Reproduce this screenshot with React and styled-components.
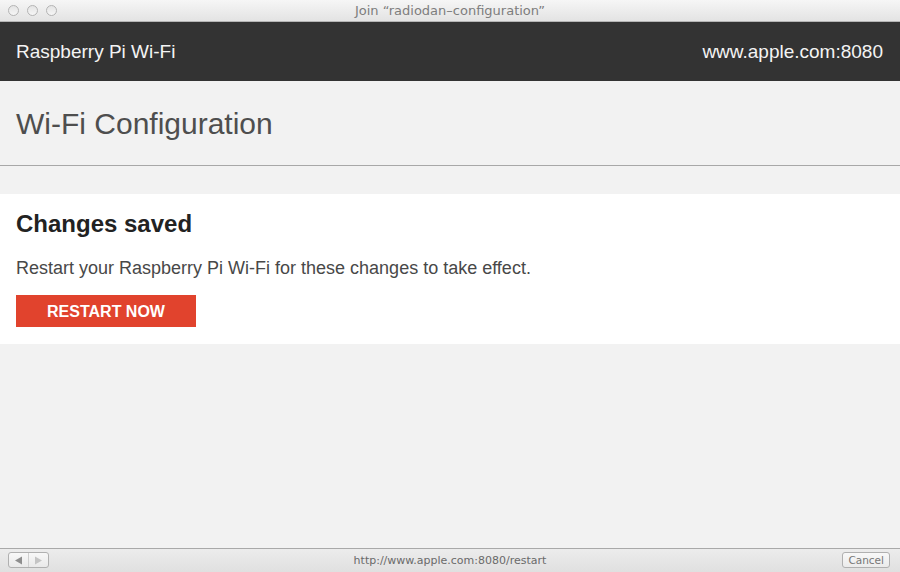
import React from "react";
import styled, { createGlobalStyle } from "styled-components";

const GlobalStyle = createGlobalStyle`
  html, body {
    margin: 0;
    padding: 0;
    height: 100%;
    background: #f2f2f2;
  }
  #root {
    height: 100%;
  }
`;

const App = () => {
  return (
    <>
      <GlobalStyle />
      <Window>
        <TitleBar>
          <Lights>
            <Light />
            <Light />
            <Light />
          </Lights>
          <WindowTitle>Join “radiodan–configuration”</WindowTitle>
        </TitleBar>

        <Page>
          <Header>
            <Brand>Raspberry Pi Wi-Fi</Brand>
            <Host>www.apple.com:8080</Host>
          </Header>

          <PageTitle>
            <h1>Wi-Fi Configuration</h1>
          </PageTitle>

          <Card>
            <CardHeading>Changes saved</CardHeading>
            <CardText>
              Restart your Raspberry Pi Wi-Fi for these changes to take effect.
            </CardText>
            <RestartButton>RESTART NOW</RestartButton>
          </Card>
        </Page>

        <StatusBar>
          <NavButtons>
            <NavHalf>
              <svg width="9" height="9" viewBox="0 0 9 9">
                <polygon points="8,0.5 8,8.5 1,4.5" fill="#8e8e8e" />
              </svg>
            </NavHalf>
            <NavHalf last>
              <svg width="9" height="9" viewBox="0 0 9 9">
                <polygon points="1,0.5 1,8.5 8,4.5" fill="#c4c4c4" />
              </svg>
            </NavHalf>
          </NavButtons>
          <StatusUrl>http://www.apple.com:8080/restart</StatusUrl>
          <CancelButton>Cancel</CancelButton>
        </StatusBar>
      </Window>
    </>
  );
};

export default App;

const Window = styled.div`
  display: flex;
  flex-direction: column;
  height: 572px;
  width: 900px;
  overflow: hidden;
  background: #f2f2f2;
`;

const TitleBar = styled.div`
  position: relative;
  height: 22px;
  flex-shrink: 0;
  display: flex;
  align-items: center;
  justify-content: center;
  background: linear-gradient(#f6f6f6, #e3e3e3);
  border-bottom: 1px solid #b5b5b5;
  box-sizing: border-box;
`;

const Lights = styled.div`
  position: absolute;
  left: 8px;
  top: 5px;
  display: flex;
  gap: 8px;
`;

const Light = styled.span`
  width: 11px;
  height: 11px;
  border-radius: 50%;
  box-sizing: border-box;
  border: 1px solid #b4b4b4;
  background: linear-gradient(#e4e4e4, #f6f6f6);
`;

const WindowTitle = styled.div`
  font-family: "DejaVu Sans", "Liberation Sans", sans-serif;
  font-size: 13px;
  color: #7d7d7d;
`;

const Page = styled.div`
  flex: 1;
  display: flex;
  flex-direction: column;
  font-family: "Liberation Sans", Arial, sans-serif;
`;

const Header = styled.div`
  height: 59px;
  display: flex;
  align-items: center;
  justify-content: space-between;
  padding: 0 17px 0 16px;
  background: #333333;
  color: #f4f4f4;
  font-size: 19px;
`;

const Brand = styled.div``;

const Host = styled.div``;

const PageTitle = styled.div`
  height: 84px;
  display: flex;
  align-items: center;
  padding: 0 16px;
  border-bottom: 1px solid #a8a8a8;
  margin-bottom: 28px;

  h1 {
    margin: 0;
    font-size: 30px;
    font-weight: normal;
    color: #4e4e4e;
    padding-top: 2px;
  }
`;

const Card = styled.div`
  background: #ffffff;
  padding: 16px 16px 17px;
`;

const CardHeading = styled.h2`
  margin: 0;
  font-size: 24px;
  font-weight: bold;
  color: #222222;
  line-height: 28px;
`;

const CardText = styled.p`
  margin: 19px 0 16px;
  font-size: 18px;
  color: #484848;
  line-height: 22px;
`;

const RestartButton = styled.button`
  display: block;
  width: 180px;
  height: 32px;
  padding: 2px 0 0;
  border: none;
  background: #e1432d;
  color: #ffffff;
  font-family: "Liberation Sans", Arial, sans-serif;
  font-size: 16px;
  font-weight: bold;
  cursor: pointer;
`;

const StatusBar = styled.div`
  position: relative;
  height: 24px;
  flex-shrink: 0;
  display: flex;
  align-items: center;
  justify-content: center;
  border-top: 1px solid #a9a9a9;
  background: linear-gradient(#ececec, #e0e0e0);
  box-sizing: border-box;
`;

const NavButtons = styled.div`
  position: absolute;
  left: 8px;
  top: 3px;
  display: flex;
  height: 16px;
  border: 1px solid #b0b0b0;
  border-radius: 3px;
  background: linear-gradient(#f8f8f8, #e9e9e9);
  box-sizing: border-box;
`;

const NavHalf = styled.span`
  width: 19px;
  display: flex;
  align-items: center;
  justify-content: center;
  border-right: ${({ last }) => (last ? "none" : "1px solid #cfcfcf")};
`;

const StatusUrl = styled.div`
  font-family: "DejaVu Sans", "Liberation Sans", sans-serif;
  font-size: 11px;
  color: #6a6a6a;
`;

const CancelButton = styled.div`
  position: absolute;
  right: 10px;
  top: 3px;
  height: 16px;
  padding: 0 5px;
  display: flex;
  align-items: center;
  border: 1px solid #b0b0b0;
  border-radius: 3px;
  box-sizing: border-box;
  background: linear-gradient(#f8f8f8, #ebebeb);
  font-family: "DejaVu Sans", "Liberation Sans", sans-serif;
  font-size: 10.5px;
  color: #777777;
`;
